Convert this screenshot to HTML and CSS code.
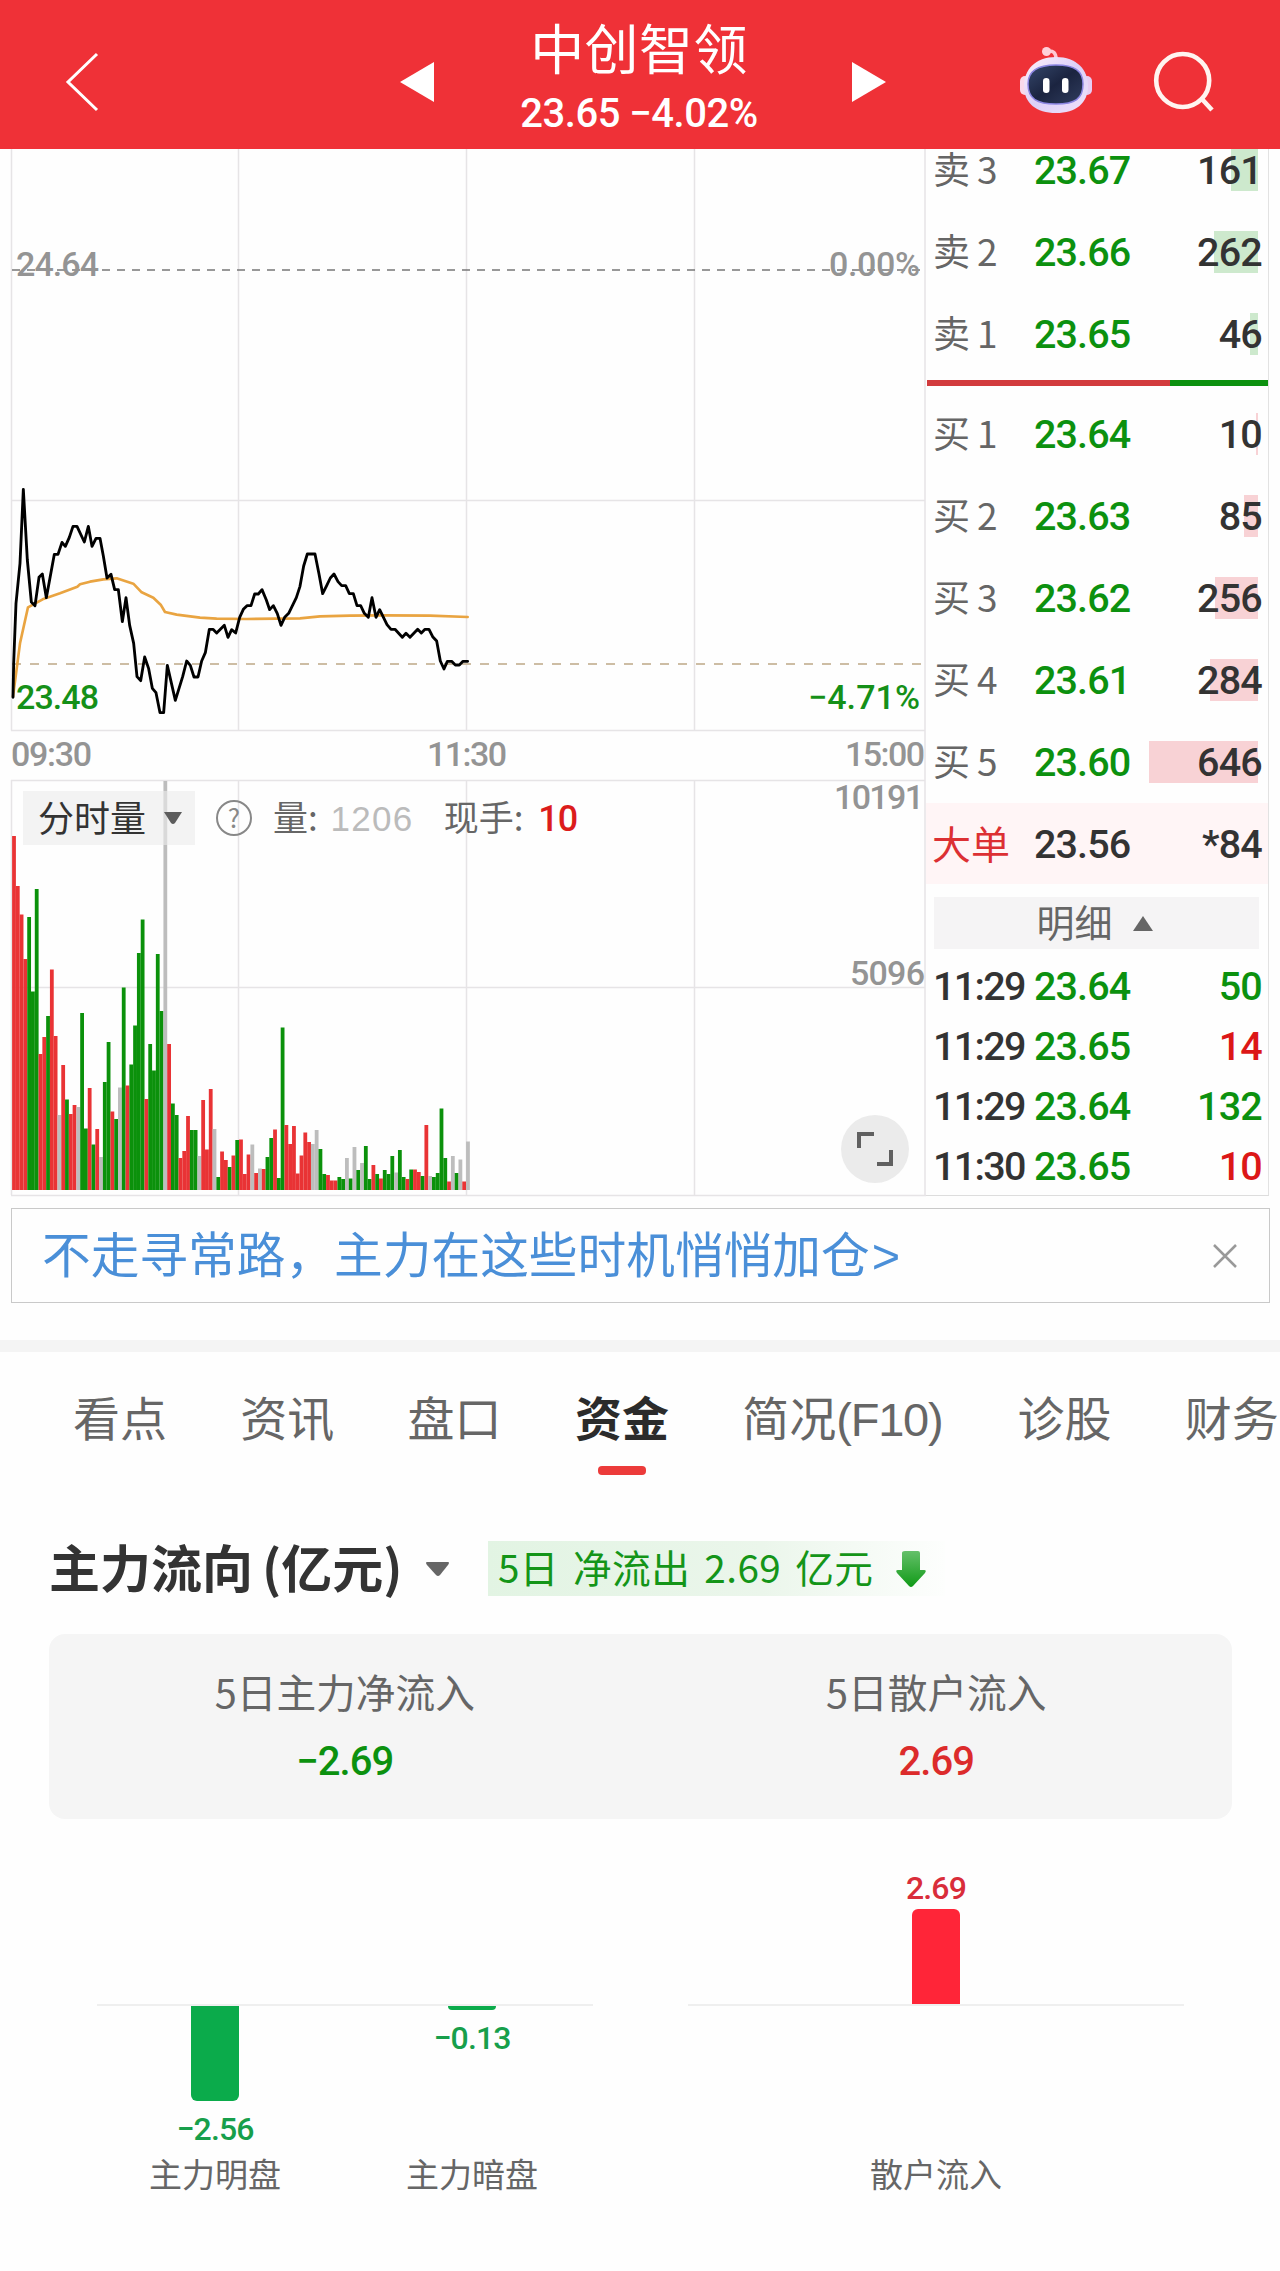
FILE: index.html
```html
<!DOCTYPE html>
<html lang="zh-CN">
<head>
<meta charset="utf-8">
<title>中创智领</title>
<link rel="stylesheet" href="styles.css">
</head>
<body>
<header class="topbar">
  <svg class="back" width="120" height="148" viewBox="0 0 120 148"><path d="M97 54 68 82l29 28"/></svg>
  <div class="stock">
    <svg width="34" height="40" viewBox="0 0 34 40"><path d="M34 0v40L0 20z" fill="#fff"/></svg>
    <div class="stock-name">
      <h1>中创智领</h1>
      <p>23.65 −4.02%</p>
    </div>
    <svg width="34" height="40" viewBox="0 0 34 40"><path d="M0 0v40l34-20z" fill="#fff"/></svg>
  </div>
  <svg class="tools" width="260" height="110" viewBox="1000 30 260 110">
    <defs>
      <linearGradient id="shell" x1="0" y1="0" x2="1" y2="1"><stop offset="0" stop-color="#fff0fa"/><stop offset=".5" stop-color="#dcd0f8"/><stop offset="1" stop-color="#f0e2fa"/></linearGradient>
      <linearGradient id="visor" x1="0" y1="0" x2="1" y2="1"><stop offset="0" stop-color="#35476b"/><stop offset=".5" stop-color="#1b2440"/><stop offset="1" stop-color="#303d5e"/></linearGradient>
    </defs>
    <path d="M1048 51q8-1 8 8" fill="none" stroke="#ffc9d3" stroke-width="3.5"/>
    <circle cx="1046.500" cy="51.500" r="4.500" fill="#ffd0da"/>
    <rect x="1020" y="76" width="10" height="19" rx="5" fill="#f9d9ea"/>
    <rect x="1082" y="76" width="10" height="19" rx="5" fill="#e6cdf3"/>
    <path d="M1056 57c21 0 32 13 32 29 0 17-12 27-32 27s-32-10-32-27c0-16 11-29 32-29z" fill="url(#shell)"/>
    <path d="M1056 65c19 0 27 6 27 19 0 15-8 20-27 20s-28-5-28-20c0-13 9-19 28-19z" fill="url(#visor)" stroke="#8c86e2" stroke-width="1.500"/>
    <rect x="1043" y="78" width="6.500" height="15" rx="3.200" fill="#fff"/>
    <rect x="1062" y="78" width="6.500" height="15" rx="3.200" fill="#fff"/>
    <g fill="none" stroke="#fff4f0" stroke-width="4.600"><circle cx="1182.700" cy="80.500" r="26.500"/><path d="M1201 98l11 12"/></g>
  </svg>
</header>

<main>
<section class="quote">
  <div class="charts">
    <svg class="plot" width="926" height="1048" viewBox="0 149 926 1048">
      <g class="grid">
        <path d="M11.500 148V730.500M238.500 148V730.500M466.500 148V730.500M694.500 148V730.500M925 148V1195"/>
        <path d="M11 500.500H925M11 730.500H925M11 780.500H925M11 987.500H925M11 1195.500H926"/>
        <path d="M11.500 780V1195M238.500 780V1195M466.500 780V1195M694.500 780V1195"/>
      </g>
      <path class="zero" d="M12 270H925"/>
      <path class="last" d="M12 664H925"/>
      <g class="trend" transform="translate(0 450) scale(.33333)">
        <path class="avg" d="M39 740 60 580 84 472 128 448 180 430 232 410 240 403 270 395 310 388 350 385 400 401 425 427 460 443 482 464 495 486 530 494 600 503 650 506 740 507 900 505 960 499 1050 497 1150 496 1290 497 1403 501"/>
        <path class="price" d="M39 742 41 640 48 460 60 340 70 118 82 330 94 456 105 467 117 382 127 372 139 443 163 313 174 313 186 277 196 289 208 262 219 229 231 229 253 276 265 229 276 289 288 265 300 265 310 318 321 384 333 373 344 419 355 419 367 515 378 443 389 526 401 580 411 680 422 692 434 621 446 656 457 715 468 728 480 788 491 788 502 646 526 751 548 680 560 633 571 646 582 681 594 681 605 633 616 608 628 538 639 538 650 549 673 526 684 562 695 539 707 549 719 502 730 478 741 467 753 467 764 432 775 432 786 419 799 450 809 479 820 467 832 491 843 526 854 502 866 490 889 443 900 409 911 348 922 312 945 312 957 372 968 431 980 407 991 384 1002 372 1014 395 1025 407 1037 407 1048 431 1060 431 1071 467 1082 467 1093 490 1105 502 1116 443 1128 502 1139 479 1161 524 1173 538 1185 538 1207 562 1218 550 1230 562 1253 538 1264 549 1275 538 1287 538 1298 560 1310 573 1321 633 1332 657 1342 634 1355 634 1366 645 1378 645 1389 634 1403 634"/>
      </g>
      <g id="volume"></g>
      <g class="scale">
        <text x="16" y="276" textLength="83">24.64</text>
        <text x="829" y="276" textLength="91">0.00%</text>
        <text class="down" x="16" y="709" textLength="83">23.48</text>
        <text class="down" x="808" y="709" textLength="112">−4.71%</text>
        <text x="11" y="766" textLength="81">09:30</text>
        <text x="427" y="766" textLength="80">11:30</text>
        <text x="845" y="766" textLength="80">15:00</text>
        <text x="834" y="809" textLength="90">10191</text>
        <text x="850" y="985" textLength="75">5096</text>
      </g>
    </svg>
    <div class="indicator">
      <button class="picker"><span>分时量</span><svg width="18" height="12" viewBox="0 0 18 12"><path d="M0 0h18l-7 11q-2 2-4 0z" fill="#5c5c5c"/></svg></button>
      <span class="help">?</span>
      <span class="vol">量: <i>1206</i></span>
      <span class="now">现手: <b>10</b></span>
    </div>
    <button class="expand"><svg width="36" height="36" viewBox="0 0 36 36"><path d="M2 17V3h15M20 33h14V19"/></svg></button>
  </div>

  <div class="book">
    <div class="row sell"><span>卖<em>3</em></span><b>23.67</b><u><i style="width:27px"></i>161</u></div>
    <div class="row sell"><span>卖<em>2</em></span><b>23.66</b><u><i style="width:44px"></i>262</u></div>
    <div class="row sell"><span>卖<em>1</em></span><b>23.65</b><u><i style="width:8px"></i>46</u></div>
    <div class="ratio"><i style="width:243px"></i></div>
    <div class="row buy"><span>买<em>1</em></span><b>23.64</b><u><i style="width:2px"></i>10</u></div>
    <div class="row buy"><span>买<em>2</em></span><b>23.63</b><u><i style="width:14px"></i>85</u></div>
    <div class="row buy"><span>买<em>3</em></span><b>23.62</b><u><i style="width:43px"></i>256</u></div>
    <div class="row buy"><span>买<em>4</em></span><b>23.61</b><u><i style="width:48px"></i>284</u></div>
    <div class="row buy"><span>买<em>5</em></span><b>23.60</b><u><i style="width:109px"></i>646</u></div>
    <div class="row big"><span>大单</span><b>23.56</b><u>*84</u></div>
    <div class="detail"><span>明细</span><svg width="20" height="15" viewBox="0 0 20 15"><path d="M10 0l10 15H0z" fill="#666"/></svg></div>
    <div class="row tick"><span>11:29</span><b>23.64</b><u class="g">50</u></div>
    <div class="row tick"><span>11:29</span><b>23.65</b><u class="r">14</u></div>
    <div class="row tick"><span>11:29</span><b>23.64</b><u class="g">132</u></div>
    <div class="row tick"><span>11:30</span><b>23.65</b><u class="r">10</u></div>
  </div>
</section>

<a class="promo"><span>不走寻常路，主力在这些时机悄悄加仓<em>&gt;</em></span><svg width="24" height="24" viewBox="0 0 24 24"><path d="M1 1l22 22M23 1L1 23" stroke="#999" stroke-width="2.500"/></svg></a>

<nav class="tabs">
  <a>看点</a><a>资讯</a><a>盘口</a><a class="active">资金</a><a class="wide">简况<span>(F10)</span></a><a>诊股</a><a>财务</a>
</nav>

<section class="flow">
  <div class="flow-head">
    <h2>主力流向<span>(亿元)</span></h2>
    <svg class="caret" width="23" height="14" viewBox="0 0 23 14"><path d="M1 0h21q2 0 0 3l-8 10q-2 2-4 0L1 3q-2-3 0-3z" fill="#666"/></svg>
    <div class="chip"><span>5日 净流出 2.69 亿元</span>
      <svg width="30" height="36" viewBox="0 0 30 36"><defs><linearGradient id="fall" x1="0" y1="0" x2="0" y2="1"><stop offset="0" stop-color="#65c06a"/><stop offset="1" stop-color="#109a17"/></linearGradient></defs><path d="M9 0h13q2 0 2 2v17h4q3 0 1 3L17 35q-2 2-4 0L1 22q-2-3 1-3h4V2q0-2 3-2z" fill="url(#fall)"/></svg>
    </div>
  </div>
  <div class="summary">
    <div><span>5日主力净流入</span><b class="g">−2.69</b></div>
    <div><span>5日散户流入</span><b class="r">2.69</b></div>
  </div>
  <div class="bars">
    <div class="group">
      <div class="col neg"><i style="height:95px"></i><b>−2.56</b><span>主力明盘</span></div>
      <div class="col neg"><i style="height:4px"></i><b>−0.13</b><span>主力暗盘</span></div>
    </div>
    <div class="group">
      <div class="col pos"><b>2.69</b><i style="height:95px"></i><span>散户流入</span></div>
    </div>
  </div>
</section>
</main>
<script src="volume.js"></script>
</body>
</html>
```
FILE: volume.js
```js
// One entry per minute: direction (r = up, g = down, w = flat) and bar height.
const minutes = `r354 r304 r275.500 r231 g273 g198.500 g301 r136 r153 g174 r220.500 r154 w75 r125 g90.500 r76
r85 w83 g177 g61.500 r102 g45.500 r61 w33 g108 g148 r78.500 g71 w102.500 g202.500 r104.500 g125.500
g164.500 g237 g270.500 r91 g146 g119.500 g236 g179 w409 r146 g86.500 g75 r32 r39 r74 g60
g60 w34 r90 r40.500 r101 w61 g13 r38.500 r30 g23 r34.500 g50 r50.500 r16 r35.500 w45.500
r17 w21.500 r21 g33 g52 r60.500 g12 g162.500 r65 r46 r64 r16.500 r34.500 r57.500 r48 w46
w60 g41 g16 r15 r9.500 r9.500 g13 g11 w32 g11.500 w43 g20 w27 g44 g11 r25
g16 r11.500 g20 g16 g34 w17.500 g40 g13 r11 g20.500 r20.500 r18 g14 r65 w14 g13
g17 g81.500 g32 r8.500 w34 g17 w30.500 r8.500 w48.500`.split(/\s+/);
const layer = document.getElementById('volume');
minutes.forEach((minute, i) => {
  const height = parseFloat(minute.slice(1));
  const bar = document.createElementNS('http://www.w3.org/2000/svg', 'rect');
  bar.setAttribute('class', 'v' + minute[0]);
  bar.setAttribute('x', 12.1 + 3.783 * i);
  bar.setAttribute('y', 1190 - height);
  bar.setAttribute('width', 3.8);
  bar.setAttribute('height', height);
  layer.appendChild(bar);
});
```
FILE: styles.css
```css
* { box-sizing: border-box; }
body { margin: 0; width: 1280px; height: 2271px; overflow: hidden; background: #fefefe; color: #333; font-family: "Noto Sans CJK SC", sans-serif; }
h1, h2, p { margin: 0; font-weight: 400; }
b { font-weight: 500; }
i, em { font-style: normal; }
u, a { text-decoration: none; }
svg { display: block; flex: none; }
button { border: 0; padding: 0; font: inherit; color: inherit; }
.g { color: #0c910f; }
.r { color: #dc2b2b; }

.topbar { height: 149px; background: #ef3137; display: flex; color: #fff; }
.back { fill: none; stroke: #fff; stroke-width: 3; }
.stock { display: flex; width: 486px; margin-left: 280px; justify-content: space-between; align-items: center; padding-top: 14px; }
.stock-name { text-align: center; margin: -14px 8px 0 0; }
.stock-name h1 { font-size: 54px; line-height: 60px; margin-top: 4px; font-weight: 400; letter-spacing: .4px; white-space: nowrap; }
.stock-name p { font: 500 40px/46px Roboto, sans-serif; margin-top: 14px; white-space: nowrap; letter-spacing: -.5px; }
.tools { margin: 30px 20px 0 114px; }

.quote { display: flex; height: 1047px; }
.charts { position: relative; width: 926px; flex: none; }
.grid path { fill: none; stroke: #e6e4e6; stroke-width: 1.500; }
.zero { fill: none; stroke: #777; stroke-width: 1.500; stroke-dasharray: 8 7; }
.last { fill: none; stroke: #cdbda4; stroke-width: 1.800; stroke-dasharray: 9 9; }
.trend path { fill: none; stroke-linejoin: round; stroke-linecap: round; }
.avg { stroke: #e9a441; stroke-width: 8; }
.price { stroke: #000; stroke-width: 8.500; }
.vr { fill: #e93335; }
.vg { fill: #0b910b; }
.vw { fill: #bdbdbd; }
.scale text { font: 500 34px Roboto, sans-serif; fill: #949494; }
.scale .down { fill: #159018; }
.indicator { position: absolute; left: 23px; top: 642px; height: 54px; display: flex; align-items: center; font-size: 35px; color: #666; white-space: nowrap; }
.picker { width: 172px; height: 54px; display: flex; align-items: center; padding-left: 15px; gap: 18px; background: rgba(235,235,235,.6); color: #333; font-size: 36px; }
.picker span { margin-top: -4px; }
.help { width: 36px; height: 36px; margin-left: 21px; border: 2.500px solid #888; border-radius: 50%; font-size: 26px; line-height: 30px; text-align: center; color: #888; }
.vol { margin: -5px 0 0 21px; }
.vol i { font-family: "Liberation Sans", sans-serif; color: #bbb; margin-left: 5px; letter-spacing: 1.300px; }
.now { margin: -5px 0 0 30px; }
.now b { color: #dc1c1c; font-family: Roboto, sans-serif; font-size: 36px; margin-left: 7px; letter-spacing: -1px; }
.expand { position: absolute; left: 841px; top: 966px; width: 68px; height: 68px; border-radius: 50%; background: #ebebeb; display: grid; place-items: center; }
.expand path { fill: none; stroke: #606060; stroke-width: 4; }

.book { width: 343px; height: 1047px; border-right: 1.500px solid #e2e2e2; border-bottom: 1.500px solid #ddd; display: flex; flex-direction: column; }
.book > * { flex: none; }
.row { height: 82px; display: flex; align-items: center; padding-left: 7px; padding-right: 6px; font: 500 39.500px/1 Roboto, "Noto Sans CJK SC", sans-serif; }
.row:first-child { height: 42px; margin-bottom: 20px; }
.row span { width: 101px; font: 400 37px/1 "Noto Sans CJK SC", sans-serif; color: #666; white-space: nowrap; margin-top: -3px; }
.row em { margin-left: 7px; }
.row b { color: #0c910f; width: 110px; letter-spacing: -.9px; margin-top: 2px; }
.row u { flex: 1; position: relative; text-align: right; letter-spacing: -.8px; color: #333; z-index: 0; margin-top: 2px; }
.row u i { position: absolute; z-index: -1; right: 4px; top: -2px; height: 42px; }
.sell i { background: #cde9cd; }
.buy i { background: #f8d2d5; }
.ratio { height: 6px; margin: 5px 0 7px 1px; background: #0c910f; }
.ratio i { display: block; height: 6px; background: #d23b3d; }
.row.big { height: 81px; background: #fff5f6; }
.row.big span { font-size: 39px; color: #dc3033; margin-left: -1px; width: 102px; margin-top: -2px; }
.row.big b { color: #333; }
.detail { height: 52px; margin: 13px 9px 7px 8px; background: #f5f4f5; display: flex; align-items: center; justify-content: center; gap: 20px; font-size: 38px; line-height: 52px; color: #666; padding-right: 4px; }
.detail span { margin-top: -4px; }
.row.tick { height: 59.800px; }
.row.tick span { font: 500 39.500px/1 Roboto, sans-serif; letter-spacing: -1.700px; color: #333; margin-top: 2px; }
.row .g { color: #0c910f; }
.row .r { color: #dc1717; }

.promo { margin: 12px 10px 0 11px; height: 95px; border: 1.500px solid #c9c9c9; display: flex; align-items: center; justify-content: space-between; padding: 0 32px 0 30px; color: #4a8fd8; font-size: 48.700px; line-height: 1; white-space: nowrap; }
.promo span { margin-top: -2px; }
.promo em { font-family: "Liberation Sans", sans-serif; margin-left: 2px; }

.tabs { margin-top: 37px; border-top: 12px solid #f4f4f4; height: 136px; overflow: hidden; display: flex; gap: 73.300px; padding: 30px 0 0 73px; font-size: 47px; line-height: 68px; color: #666; white-space: nowrap; }
.tabs a { position: relative; flex: none; width: 94px; }
.tabs .wide { width: 202px; }
.wide span { font-family: "Liberation Sans", sans-serif; letter-spacing: -1.200px; font-size: 47px; }
.active { color: #2b2b2b; font-weight: 700; }
.active::after { content: ""; position: absolute; left: 23px; top: 84px; width: 48px; height: 9px; border-radius: 4px; background: #ec3b3a; }

.flow { padding: 65px 48px 0 49px; }
.flow-head { display: flex; align-items: center; height: 55px; }
h2 { width: 377px; font-size: 51px; line-height: 55px; font-weight: 700; white-space: nowrap; margin-top: -4px; }
h2 span { margin-left: 9px; }
.chip { margin-left: 39px; width: 457px; height: 55px; background: linear-gradient(90deg, #e2f4e3, #ebf6eb 60%, #fdfefd); display: flex; align-items: center; justify-content: space-between; padding: 0 19px 0 10px; font-size: 38.700px; letter-spacing: .4px; word-spacing: 5px; color: #149518; white-space: nowrap; }
.chip span { margin-top: -6px; }
.summary { margin-top: 38px; height: 185px; border-radius: 16px; background: #f5f5f5; display: flex; padding-top: 29px; }
.summary div { flex: 1; display: flex; flex-direction: column; align-items: center; font-size: 39.700px; line-height: 56px; color: #666; }
.summary b { font: 500 40px/46px Roboto, sans-serif; margin-top: 20px; letter-spacing: -1px; }
.summary .r { color: #dc2b2b; }
.bars { display: flex; justify-content: space-between; height: 400px; padding: 0 48px; }
.group { width: 496px; display: flex; justify-content: space-around; height: 187px; border-bottom: 2px solid #efefef; }
.col { width: 150px; height: 374px; display: flex; flex-direction: column; align-items: center; font-size: 33px; color: #666; white-space: nowrap; }
.group:first-child { justify-content: flex-start; padding-left: 43px; gap: 107px; }
.col i { width: 48px; flex: none; }
.col b { font: 500 32px/36px Roboto, sans-serif; letter-spacing: -.9px; }
.col span { line-height: 40px; margin-top: auto; }
.neg { padding-top: 187px; }
.neg i { background: #0bab4b; border-radius: 0 0 6px 6px; }
.neg b { color: #179f4b; margin-top: 10px; }
.pos { padding-top: 51px; }
.pos i { background: #ff2538; border-radius: 6px 6px 0 0; margin-top: 3px; }
.pos b { color: #d92d3a; }
```
